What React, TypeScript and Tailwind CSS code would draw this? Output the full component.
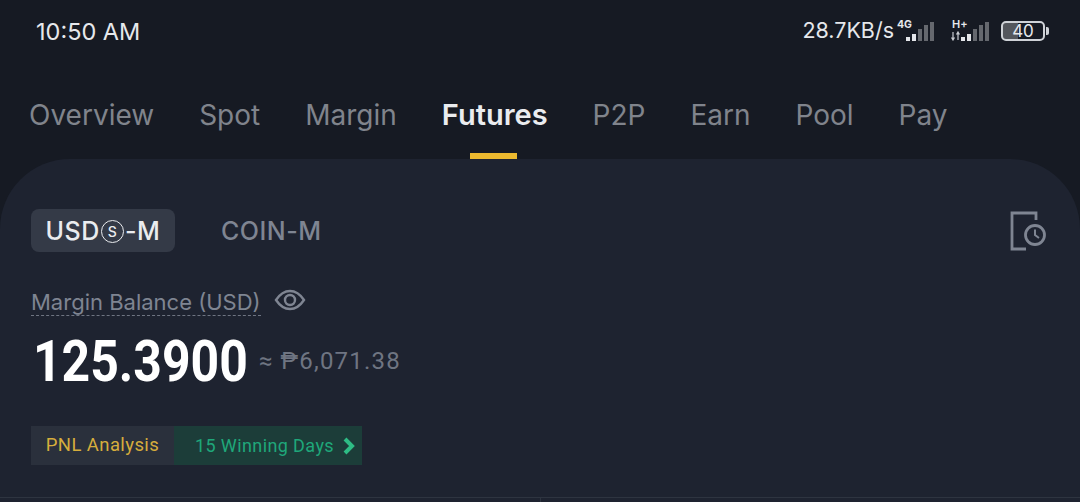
import React from "react";

const tabs = ["Overview", "Spot", "Margin", "Futures", "P2P", "Earn", "Pool", "Pay"];

const SignalBars = () => (
  <svg width="30" height="21" viewBox="0 0 30 21" className="block">
    <rect x="1" y="16" width="4" height="4" fill="#e4e6ea" />
    <rect x="7" y="13" width="4" height="7" fill="#e4e6ea" />
    <rect x="13" y="8" width="4" height="12" fill="#65686e" />
    <rect x="19" y="4" width="4" height="16" fill="#65686e" />
    <rect x="25" y="1" width="4" height="19" fill="#65686e" />
  </svg>
);

const StatusBar = () => (
  <div className="flex h-[62px] items-center justify-between pl-[36px] pr-[31px] text-[#e6e8ec]">
    <span className="mt-[2px] text-[23.5px] leading-none">10:50 AM</span>
    <div className="flex items-center">
      <span className="text-[21.5px] leading-none">28.7KB/s</span>
      <div className="ml-[3px] flex flex-col items-start">
        <span className="h-[9px] text-[10.5px] font-bold leading-[9px]">4G</span>
        <div className="-mt-[8px] ml-[8px]">
          <SignalBars />
        </div>
      </div>
      <div className="ml-[16px] flex flex-col items-start">
        <span className="ml-[1px] h-[9px] text-[11px] font-semibold leading-[9px]">H+</span>
        <div className="-mt-[8px] flex items-end">
          <svg width="9" height="10" viewBox="0 0 9 10" className="mb-[1px] block">
            <path d="M2 1v8M0.5 6.5 2 9l1.5-2.5M7 9V1M5.5 3.5 7 1l1.5 2.5" stroke="#c9ccd2" strokeWidth="1.2" fill="none" />
          </svg>
          <SignalBars />
        </div>
      </div>
      <div className="ml-[11px] flex items-center">
        <div className="flex h-[20px] w-[44px] items-center justify-center rounded-[5px] border-2 border-[#cfd2d7] bg-[linear-gradient(90deg,#54575d_0_38%,transparent_38%)] text-[17px] leading-none">
          40
        </div>
        <div className="ml-[1px] h-[8px] w-[3px] rounded-r-[2px] bg-[#cfd2d7]" />
      </div>
    </div>
  </div>
);

const TabBar = () => (
  <div className="flex h-[97px] gap-[45px] pl-[29px]">
    {tabs.map((tab) => {
      const active = tab === "Futures";
      return (
        <div key={tab} className="relative flex h-full items-start pt-[33px]">
          <span className={active ? "text-[29px] font-semibold leading-[40px] text-[#eaecef]" : "text-[28px] leading-[40px] text-[#80848c]"}>
            {tab}
          </span>
          {active && <div className="absolute bottom-0 left-[28px] h-[6px] w-[47px] bg-[#ecb92f]" />}
        </div>
      );
    })}
  </div>
);

const MarketSwitch = () => (
  <div className="flex items-center justify-between pr-[34px]">
    <div className="flex items-center gap-[46px]">
      <div className="flex h-[43px] w-[144px] items-center justify-center rounded-[8px] bg-[#343a47] pt-[2px] text-[25px] font-medium tracking-[0.6px] text-[#eaecef]">
        <span>USD</span>
        <span className="mx-[1px] flex h-[23px] w-[23px] items-center justify-center rounded-full border-[1.5px] border-[#eaecef] text-[14px] leading-none">
          S
        </span>
        <span>-M</span>
      </div>
      <span className="pt-[2px] text-[25px] font-medium tracking-[0.5px] text-[#7f8592]">COIN-M</span>
    </div>
    <svg width="36" height="40" viewBox="0 0 36 40" fill="none" stroke="#7f8592" strokeWidth="2.8" className="block">
      <path d="M26 9V2H2v36h14" />
      <circle cx="25" cy="24" r="9.5" />
      <path d="M25 18.5V24l4 3" strokeWidth="2" />
    </svg>
  </div>
);

const Balance = () => (
  <div className="mt-[36px]">
    <div className="flex items-center gap-[13px]">
      <span className="border-b border-dashed border-[#6f7582] pt-[1px] text-[22px] leading-[26px] text-[#7f8592]">Margin Balance (USD)</span>
      <svg width="32" height="24" viewBox="0 0 32 24" fill="none" stroke="#7f8592" strokeWidth="2.4" className="-mt-[5px] block">
        <path d="M2 12C6 6 11 3 16 3s10 3 14 9c-4 6-9 9-14 9S6 18 2 12Z" />
        <circle cx="16" cy="12" r="5" />
      </svg>
    </div>
    <div className="mt-[13px] flex items-center">
      <span className="ml-[2px] w-[215px] origin-left scale-x-[0.86] whitespace-nowrap font-['Roboto',sans-serif] text-[58px] font-bold leading-[64px] text-white">
        125.3900
      </span>
      <div className="ml-[11px] flex items-center gap-[8px] text-[#6f7582]">
        <span className="font-['Roboto',sans-serif] text-[24px]">≈</span>
        <span className="font-['Roboto',sans-serif] text-[24px] tracking-[1.2px]">₱6,071.38</span>
      </div>
    </div>
  </div>
);

const PnlStrip = () => (
  <div className="mt-[33px] flex h-[39px] w-[331px] font-['Roboto',sans-serif] text-[18.5px] tracking-[0.4px]">
    <div className="flex w-[143px] items-center justify-center bg-[#2a303c] text-[#d6ad3c]">PNL Analysis</div>
    <div className="flex flex-1 items-center justify-end gap-[8px] bg-[#1c3d39] pr-[6px] text-[#1fa77a]">
      <span className="text-[18px]">15 Winning Days</span>
      <svg width="14" height="18" viewBox="0 0 14 18" fill="none" stroke="#2ebd85" strokeWidth="4" className="block">
        <path d="M3 2l7 7-7 7" />
      </svg>
    </div>
  </div>
);

export default function App() {
  return (
    <div className="h-[502px] w-[1080px] overflow-hidden bg-[#161a23] font-['Inter',sans-serif]">
      <StatusBar />
      <TabBar />
      <div className="h-[343px] rounded-t-[70px] bg-[#1e2330]">
        <div className="pl-[31px] pt-[50px]">
          <MarketSwitch />
          <Balance />
          <PnlStrip />
        </div>
        <div className="mt-[32px] flex h-[6px] border-t border-[#2e3440]">
          <div className="ml-[540px] w-px bg-[#2e3440]" />
        </div>
      </div>
    </div>
  );
}
